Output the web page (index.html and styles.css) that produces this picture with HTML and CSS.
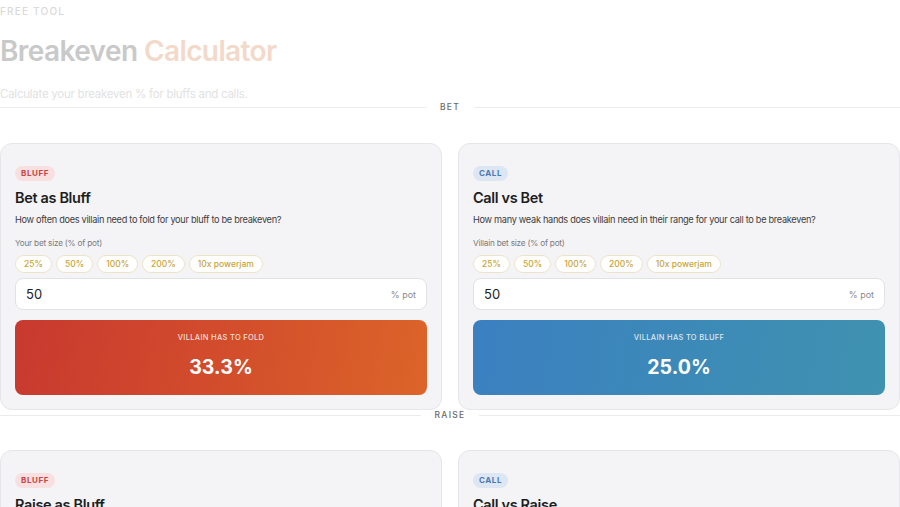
FILE: index.html
```html
<!DOCTYPE html>
<html>
<head>
<meta charset="utf-8">
<link rel="stylesheet" href="styles.css">
</head>
<body>
<header class="hero">
  <div class="eyebrow">FREE TOOL</div>
  <h1 class="title"><span class="t1">Breakeven</span> <span class="t2">Calculator</span></h1>
  <p class="sub">Calculate your breakeven % for bluffs and calls.</p>
</header>

<div class="divider"><span class="line"></span><span class="dlabel">BET</span><span class="line"></span></div>

<section class="grid">
  <div class="card">
    <span class="badge bluff">BLUFF</span>
    <h2 class="ctitle">Bet as Bluff</h2>
    <p class="desc">How often does villain need to fold for your bluff to be breakeven?</p>
    <div class="label">Your bet size (% of pot)</div>
    <div class="chips"><span class="chip">25%</span><span class="chip">50%</span><span class="chip">100%</span><span class="chip">200%</span><span class="chip">10x powerjam</span></div>
    <div class="input"><span class="val">50</span><span class="unit">% pot</span></div>
    <div class="result red"><div class="rlabel">VILLAIN HAS TO FOLD</div><div class="rval">33.3%</div></div>
  </div>
  <div class="card">
    <span class="badge call">CALL</span>
    <h2 class="ctitle">Call vs Bet</h2>
    <p class="desc">How many weak hands does villain need in their range for your call to be breakeven?</p>
    <div class="label">Villain bet size (% of pot)</div>
    <div class="chips"><span class="chip">25%</span><span class="chip">50%</span><span class="chip">100%</span><span class="chip">200%</span><span class="chip">10x powerjam</span></div>
    <div class="input"><span class="val">50</span><span class="unit">% pot</span></div>
    <div class="result blue"><div class="rlabel">VILLAIN HAS TO BLUFF</div><div class="rval">25.0%</div></div>
  </div>
</section>

<div class="divider"><span class="line"></span><span class="dlabel">RAISE</span><span class="line"></span></div>

<section class="grid g2">
  <div class="card">
    <span class="badge bluff">BLUFF</span>
    <h2 class="ctitle">Raise as Bluff</h2>
    <p class="desc">How often does villain need to fold for your raise to be breakeven?</p>
  </div>
  <div class="card">
    <span class="badge call">CALL</span>
    <h2 class="ctitle">Call vs Raise</h2>
    <p class="desc">How many weak hands does villain need for your call to be breakeven?</p>
  </div>
</section>
</body>
</html>
```

FILE: styles.css
```css
* { box-sizing: border-box; }
html, body { margin: 0; padding: 0; background: #ffffff; }
body { font-family: Inter, "Noto Sans", sans-serif; color: #1c1c1e; width: 900px; height: 507px; overflow: hidden; }

.eyebrow { font-size: 10px; letter-spacing: 1.2px; color: #dadada; line-height: 12px; padding-top: 5px; font-weight: 500; }
.title { margin: 16px 0 0 0; font-size: 28px; font-weight: 600; letter-spacing: -0.6px; line-height: 36px; }
.t1 { color: #c9c9c9; }
.t2 { color: #f3d9c9; }
.sub { margin: 17px 0 0 0; font-size: 11.5px; color: #e2e2e2; line-height: 16px; letter-spacing: -0.25px; }

.divider { display: flex; align-items: center; gap: 14px; height: 10px; }
.divider .line { flex: 1; height: 1px; background: #ececec; }
.dlabel { font-size: 8.5px; letter-spacing: 1.3px; color: #6b6b6b; font-weight: 500; line-height: 10px; }

.grid { display: grid; grid-template-columns: 1fr 1fr; gap: 16px; margin-top: 31px; }
.grid.g2 { margin-top: 30px; }
.card { display: flex; flex-direction: column; align-items: stretch; background: #f4f4f6; border: 1px solid #e6e6ea; border-radius: 12px; padding: 22px 14px 14px 14px; }

.badge { align-self: flex-start; font-size: 8px; font-weight: 700; letter-spacing: 0.6px; padding: 0 6px; line-height: 15px; border-radius: 8px; }
.badge.bluff { background: #f8e0e0; color: #c84545; }
.badge.call { background: #dde7f3; color: #4a7bb3; }

.ctitle { margin: 7px 0 0 0; font-size: 14.5px; font-weight: 600; line-height: 20px; letter-spacing: -0.35px; color: #1d1d1f; }
.desc { margin: 5px 0 0 0; font-size: 9.2px; line-height: 14px; color: #3d3d40; letter-spacing: -0.3px; }
.label { margin-top: 10px; font-size: 8.2px; color: #7a7a7e; line-height: 12px; letter-spacing: -0.2px; }

.chips { display: flex; gap: 4px; margin-top: 6px; }
.chip { background: #ffffff; border: 1px solid #ece4c8; border-radius: 9px; font-size: 8.5px; color: #c9a435; font-weight: 500; line-height: 16px; padding: 0 8px; }

.input { display: flex; justify-content: space-between; align-items: center; background: #ffffff; border: 1px solid #dfe3e3; border-radius: 8px; height: 32px; margin-top: 5px; padding: 0 10px; }
.val { font-size: 13px; color: #222; }
.unit { font-size: 9px; color: #8a8a8e; }

.result { margin-top: 10px; border-radius: 8px; height: 75px; display: flex; flex-direction: column; align-items: center; color: #fff; }
.result.red { background: linear-gradient(100deg, #c8392f 0%, #d24d2c 50%, #dc6429 100%); }
.result.blue { background: linear-gradient(100deg, #3b80c1 0%, #3c89b8 50%, #3f92b0 100%); }
.rlabel { margin-top: 12px; font-size: 7.5px; letter-spacing: 0.3px; color: rgba(255,255,255,0.82); font-weight: 500; line-height: 12px; }
.rval { margin-top: 11px; font-size: 19.5px; font-weight: 700; line-height: 24px; letter-spacing: 0.1px; }
```
